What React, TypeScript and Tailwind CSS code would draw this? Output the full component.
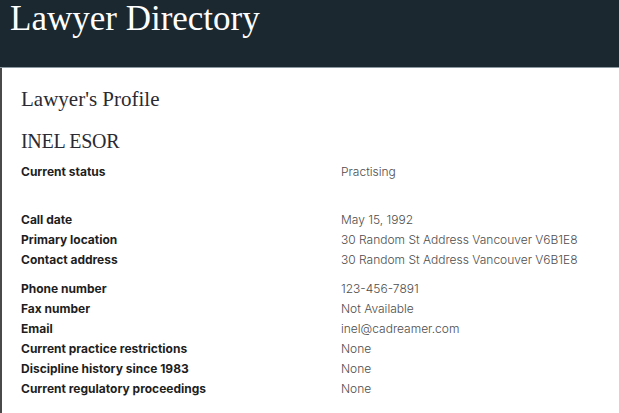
const rows: [string, string][][] = [
  [["Current status", "Practising"]],
  [
    ["Call date", "May 15, 1992"],
    ["Primary location", "30 Random St Address Vancouver V6B1E8"],
    ["Contact address", "30 Random St Address Vancouver V6B1E8"],
  ],
  [
    ["Phone number", "123-456-7891"],
    ["Fax number", "Not Available"],
    ["Email", "inel@cadreamer.com"],
    ["Current practice restrictions", "None"],
    ["Discipline history since 1983", "None"],
    ["Current regulatory proceedings", "None"],
  ],
];

export default function App() {
  return (
    <div className="w-[619px] h-[413px] overflow-hidden bg-white">
      {/* Header bar */}
      <header className="h-[68px] bg-[#1b2830] border-b border-[#8d99a0] pl-[10px]">
        <h1 className="text-[35px] leading-[38px] text-white font-['Liberation_Serif',serif]">
          Lawyer Directory
        </h1>
      </header>

      {/* Profile body */}
      <main className="h-[345px] border-l-2 border-[#4a4a4a] pl-[19px] pt-[18px]">
        <h2 className="text-[21px] leading-[26px] text-[#2a2a33] font-['Liberation_Serif',serif]">
          Lawyer's Profile
        </h2>
        <h3 className="mt-[16px] text-[20px] leading-[26px] tracking-[-0.3px] text-[#2a2a33] font-['Liberation_Serif',serif]">
          INEL ESOR
        </h3>

        <div className="mt-[8px] flex flex-col font-['Inter',sans-serif] text-[12px]">
          {rows.map((group, gi) => (
            <div
              key={gi}
              className={gi === 1 ? "mt-[28px]" : gi === 2 ? "mt-[9px]" : ""}
            >
              {group.map(([label, value]) => (
                <div key={label} className="flex h-[20px] items-center">
                  <span className="w-[320px] font-bold text-[#1e1e1e]">{label}</span>
                  <span className="font-light text-[#4d4d4d]">{value}</span>
                </div>
              ))}
            </div>
          ))}
        </div>
      </main>
    </div>
  );
}
